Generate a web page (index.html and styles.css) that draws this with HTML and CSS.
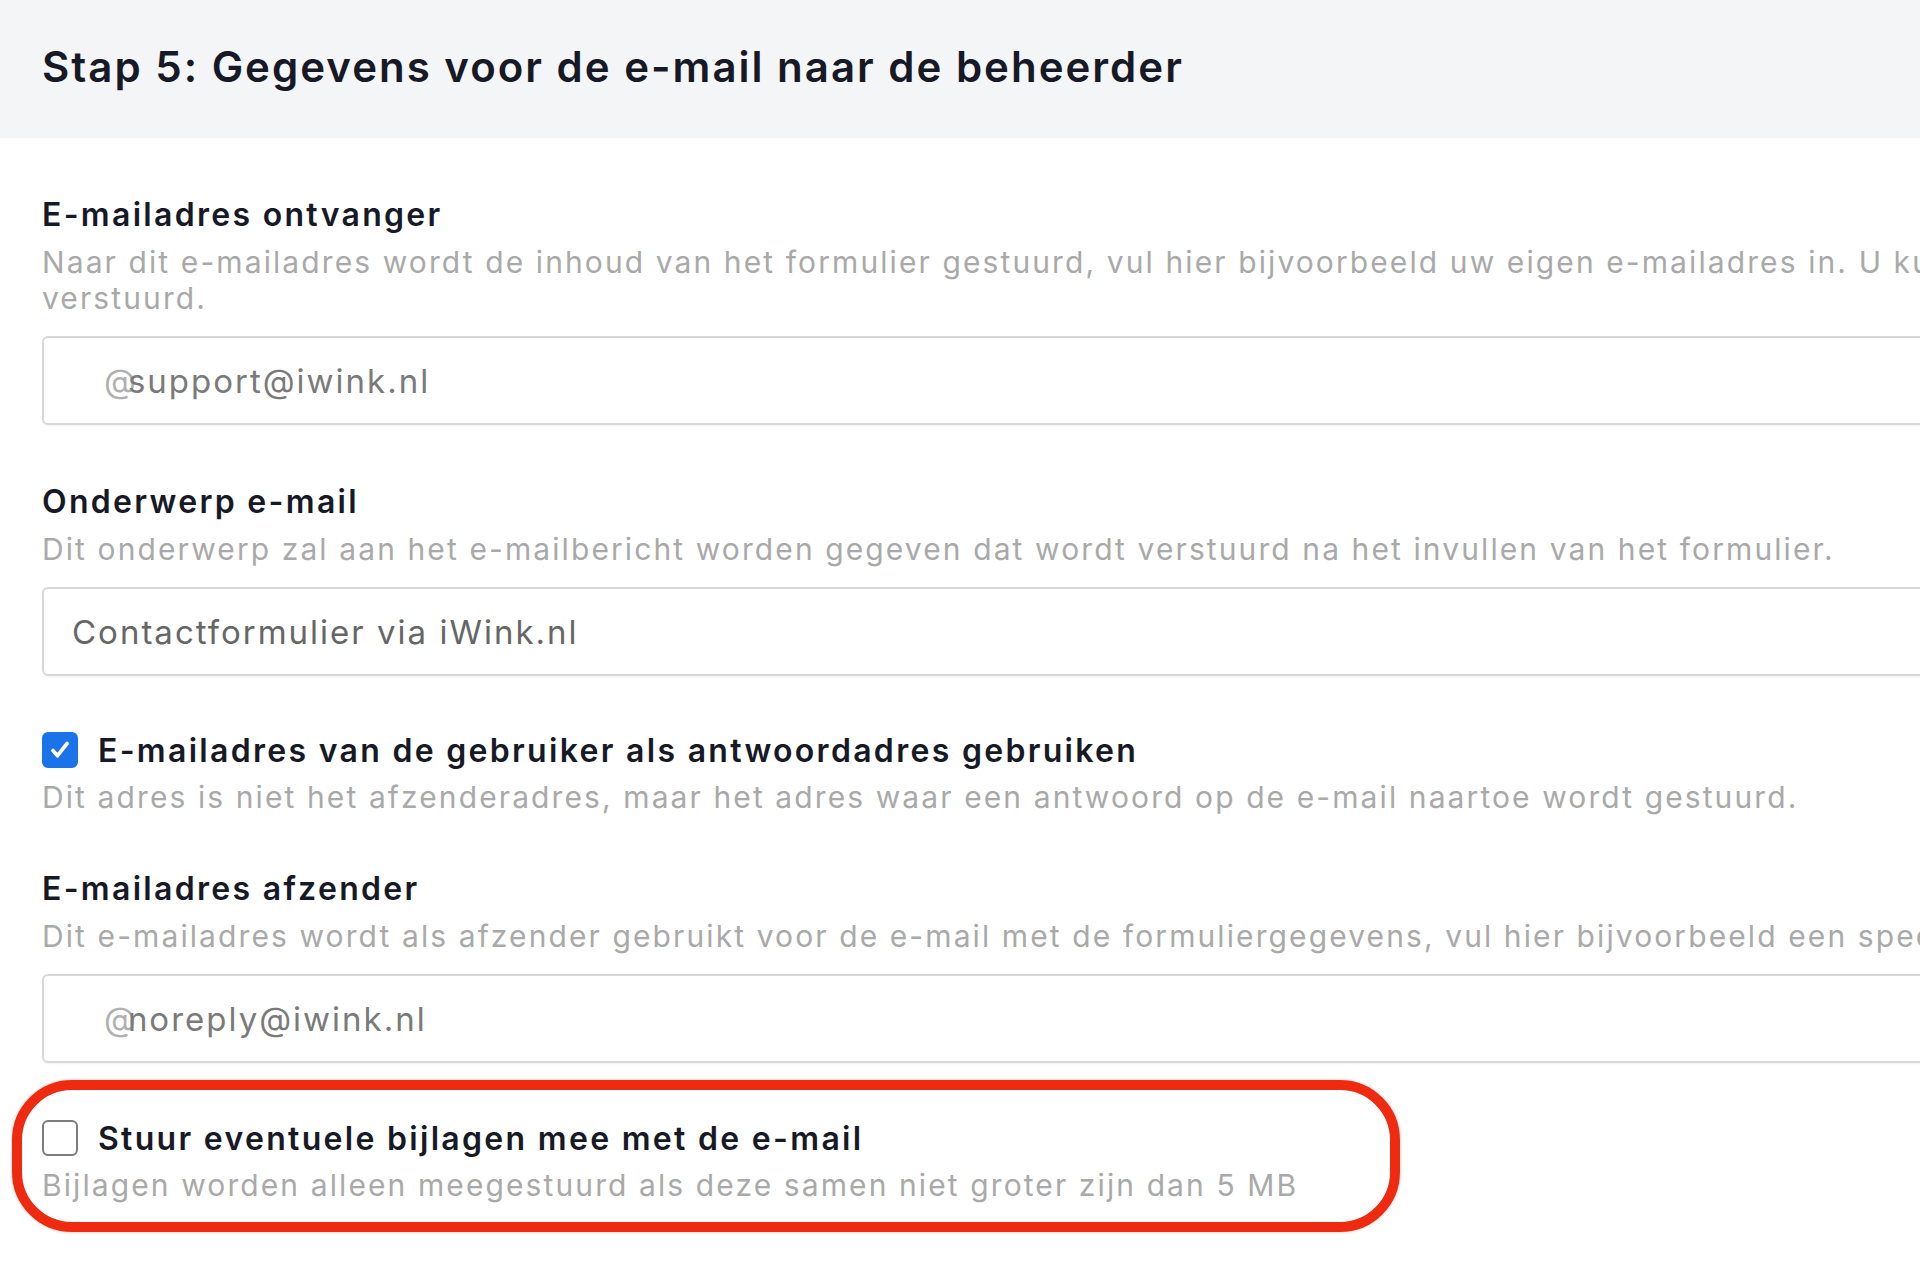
FILE: index.html
```html
<!DOCTYPE html>
<html lang="nl">
<head>
<meta charset="utf-8">
<title>Stap 5</title>
<link rel="stylesheet" href="styles.css">
</head>
<body>
<div class="page">
  <header class="step-header">
    <h1 class="step-title">Stap 5: Gegevens voor de e-mail naar de beheerder</h1>
  </header>
  <main class="form">
    <section class="field">
      <div class="label">E-mailadres ontvanger</div>
      <div class="desc"><span class="nowrap">Naar dit e-mailadres wordt de inhoud van het formulier gestuurd, vul hier bijvoorbeeld uw eigen e-mailadres in. U kunt meerdere e-mailadressen invullen, gescheiden door een komma.</span><br>verstuurd.</div>
      <div class="input icon-input"><span class="at">@</span><span class="value">support@iwink.nl</span></div>
    </section>
    <section class="field">
      <div class="label">Onderwerp e-mail</div>
      <div class="desc">Dit onderwerp zal aan het e-mailbericht worden gegeven dat wordt verstuurd na het invullen van het formulier.</div>
      <div class="input"><span class="value dark">Contactformulier via iWink.nl</span></div>
    </section>
    <section class="field field-check">
      <div class="check-row"><span class="checkbox checked"><svg viewBox="0 0 24 24" width="26" height="26"><path d="M5.5 12.5l4.2 4.8L18.5 6" fill="none" stroke="#fff" stroke-width="3.4" stroke-linecap="round" stroke-linejoin="round"/></svg></span><span class="check-label">E-mailadres van de gebruiker als antwoordadres gebruiken</span></div>
      <div class="desc">Dit adres is niet het afzenderadres, maar het adres waar een antwoord op de e-mail naartoe wordt gestuurd.</div>
    </section>
    <section class="field field-after-check">
      <div class="label">E-mailadres afzender</div>
      <div class="desc nowrap">Dit e-mailadres wordt als afzender gebruikt voor de e-mail met de formuliergegevens, vul hier bijvoorbeeld een specifiek e-mailadres in.</div>
      <div class="input icon-input"><span class="at">@</span><span class="value">noreply@iwink.nl</span></div>
    </section>
    <section class="field field-last">
      <div class="check-row"><span class="checkbox"></span><span class="check-label">Stuur eventuele bijlagen mee met de e-mail</span></div>
      <div class="desc">Bijlagen worden alleen meegestuurd als deze samen niet groter zijn dan 5 MB</div>
      <div class="annotation"></div>
    </section>
  </main>
</div>
</body>
</html>
```

FILE: styles.css
```css
html {
  overflow: hidden;
}
body {
  margin: 0;
  padding: 0;
  background: #ffffff;
}
.page {
  width: 2600px;
  font-family: "Inter", "Liberation Sans", sans-serif;
}
.step-header {
  height: 138px;
  box-sizing: border-box;
  padding-bottom: 5px;
  background: #f4f5f7;
  display: flex;
  align-items: center;
  padding-left: 42px;
}
.step-title {
  margin: 0;
  font-size: 42px;
  font-weight: 600;
  color: #171a26;
  letter-spacing: 2px;
}
.form {
  padding-left: 42px;
  padding-bottom: 80px;
}
.field {
  margin-top: 55px;
  position: relative;
}
.field-check {
  margin-top: 52px;
}
.field-after-check {
  margin-top: 52px;
}
.field-last {
  margin-top: 53px;
}
.label {
  font-size: 32px;
  line-height: 44px;
  font-weight: 600;
  color: #171a26;
  letter-spacing: 2.3px;
}
.desc {
  margin-top: 7px;
  font-size: 30px;
  line-height: 36px;
  color: #a9a9a9;
  letter-spacing: 2.1px;
  width: 1900px;
}
.nowrap {
  white-space: nowrap;
}
.input {
  margin-top: 20px;
  height: 85px;
  width: 2400px;
  border: 2px solid #d8d8d8;
  border-radius: 6px;
  box-shadow: 0 1px 2px rgba(0,0,0,0.06);
  display: flex;
  align-items: center;
  padding-left: 28px;
  box-sizing: content-box;
}
.icon-input {
  padding-left: 60px;
}
.at {
  font-size: 33px;
  color: #b0b0b0;
  margin-right: -8px;
}
.value {
  font-size: 33px;
  color: #7a7a7a;
  letter-spacing: 2px;
}
.value.dark {
  color: #666666;
}
.check-row {
  display: flex;
  align-items: center;
  height: 44px;
}
.checkbox {
  width: 36px;
  height: 36px;
  box-sizing: border-box;
  border: 2px solid #7c7c7c;
  border-radius: 6px;
  background: #fff;
  display: flex;
  align-items: center;
  justify-content: center;
  margin-right: 20px;
  flex: none;
}
.checkbox.checked {
  background: #1a73e8;
  border-color: #1a73e8;
}
.check-label {
  font-size: 32px;
  font-weight: 600;
  color: #171a26;
  letter-spacing: 2.3px;
}
.annotation {
  position: absolute;
  left: -30px;
  top: -36px;
  width: 1388px;
  height: 152px;
  box-sizing: border-box;
  border: 10px solid #ee2a10;
  border-radius: 60px;
  box-shadow: 0 0 3px rgba(238, 42, 16, 0.35);
  pointer-events: none;
}
```
